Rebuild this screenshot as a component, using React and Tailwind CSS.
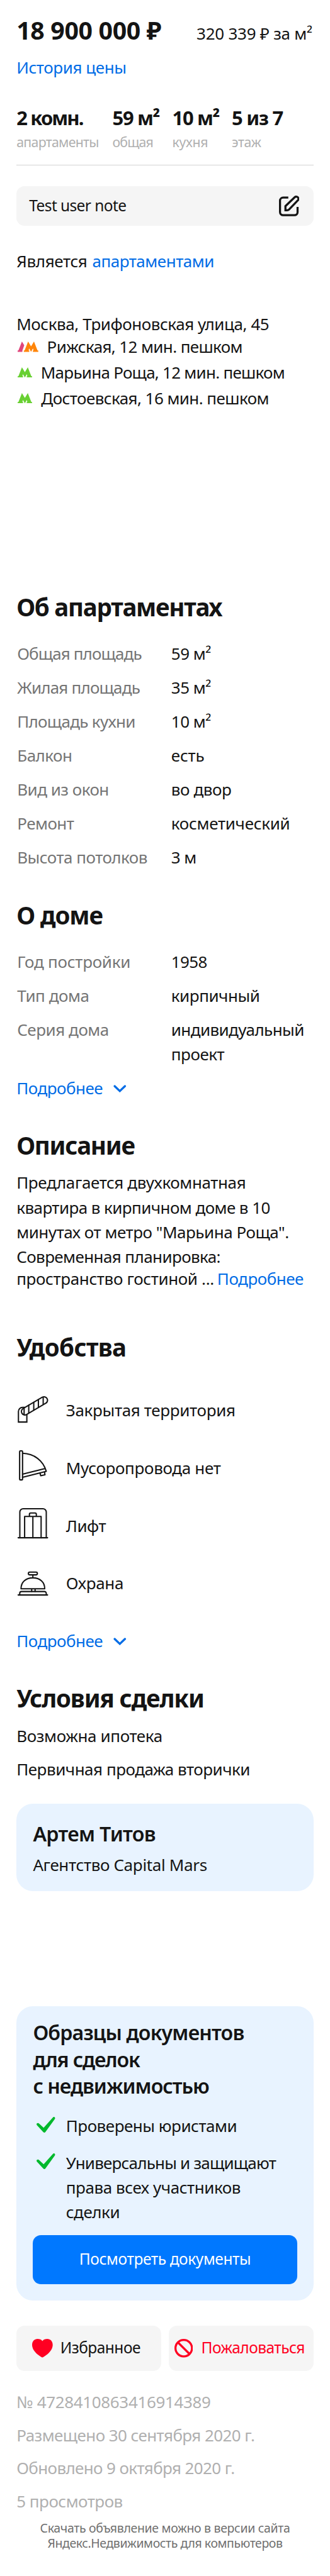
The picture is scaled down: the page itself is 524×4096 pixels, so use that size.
import React from 'react';

const METRO = 'M0 20v-2.500h1.500L8.300 0 14 9.500 19.700 0l6.800 17.500H28V20H17.500v-2.500h1.300l-1.100-4L14 20l-3.700-6.500-1.100 4h1.300V20z';

function MetroGreen() {
  return (
    <svg viewBox="0 0 28 20" className="ml-[1.6px] h-[16.4px] w-[23px] shrink-0" fill="#68d032">
      <path d={METRO} />
    </svg>
  );
}

function MetroDouble() {
  return (
    <svg viewBox="0 0 40 20" className="ml-[1.6px] h-[16.4px] w-[32.8px] shrink-0">
      <path d="M0 20v-2.500h1.500L8.300 0l4.500 7.400L10.500 14l-1.300 3.500V20z" fill="#e0457b" />
      <path d={METRO} transform="translate(12 0)" fill="#ff850a" />
    </svg>
  );
}

function NoteIcon() {
  return (
    <svg viewBox="0 0 40 40" className="h-[32.8px] w-[32.8px]" fill="none" stroke="#141414" strokeWidth="4">
      <path d="M18 3.8H8a6 6 0 0 0-6 6V32a6 6 0 0 0 6 6h22a6 6 0 0 0 6-6V22" />
      <path d="M12.5 28.5v-8L30.3 3.3a4.3 4.3 0 0 1 6.1 6.1L19.5 27q-1.6 1.5-4 1.5z" />
    </svg>
  );
}

function Amenity({ children, icon }) {
  return (
    <div className="flex h-[52.4px] items-center">
      <svg
        viewBox="0 0 64 64"
        className="h-[52.4px] w-[52.4px] shrink-0"
        fill="none"
        stroke="#141414"
        strokeWidth="2.5"
        strokeLinejoin="round"
        strokeLinecap="round"
      >
        {icon}
      </svg>
      <div className="ml-[26.2px] pt-[7.6px]">{children}</div>
    </div>
  );
}

const barrier = (
  <>
    <path d="M20.3 46v14H4V39.5a8 8 0 0 1 8-8h4" strokeLinejoin="miter" />
    <path d="M13.1 33.7 50.3 11.9a6.7 6.7 0 0 1 6.8 11.6L19.9 45.3a6.7 6.7 0 0 1-6.8-11.6z" />
    <path d="M15 33v12M24 27.3v15.2M33.7 21.6v15.2M42.7 16.4v15.2M52 12v14" />
  </>
);

const chute = (
  <>
    <rect x="6.3" y="3.7" width="5.7" height="56.3" rx="1.5" />
    <path d="M12 8.3C34 9 52 22 58 43.5L12 55M12 49l44-11" />
    <path d="m46 47.5 1.2 4.5 8.3-2-.8-4.6" />
  </>
);

const elevator = (
  <>
    <path d="M6.7 60V10.2a6.5 6.5 0 0 1 6.5-6.5h38.3a6.5 6.5 0 0 1 6.5 6.5V60M3.5 60h57" />
    <path d="M16 60V18.7h32V60M32 18.7V60M25.3 18.7v-4.2a2.5 2.5 0 0 1 2.5-2.5h8.4a2.5 2.5 0 0 1 2.5 2.5v4.2" />
  </>
);

const bell = (
  <>
    <rect x="23.3" y="15.5" width="17.4" height="5.4" rx="2.6" />
    <path d="M32 21v5.5M9 48C9 35 18.500 26.700 32 26.700S55 35 55 48zM29.700 48v5M36.300 48v5" />
    <path d="M6.500 60v-3.200a3.500 3.500 0 0 1 3.500-3.500h44.500a3.500 3.500 0 0 1 3.500 3.500V60M3.500 60h57" />
  </>
);

function More() {
  return (
    <div className="flex items-center text-[26px] leading-[39.3px] text-[#006ce6]">
      <span className="tracking-[-0.019em]">Подробнее</span>
      <svg viewBox="0 0 25 15" className="mt-[1px] ml-[17px] h-[12.3px] w-[20.5px]" fill="none" stroke="currentColor" strokeWidth="4" strokeLinecap="round">
        <path d="m2.500 2.500 10 9.500 10-9.500" />
      </svg>
    </div>
  );
}

function Row({ label, children }) {
  return (
    <div className="flex text-[26px] leading-[39.3px]">
      <div className="w-[245.600px] shrink-0 pl-px text-[#757575]">{label}</div>
      <div>{children}</div>
    </div>
  );
}

function Stat({ value, caption, className }) {
  return (
    <div className={className}>
      <div className="text-[31px] leading-[40px] font-bold whitespace-nowrap">{value}</div>
      <div className="mt-1 text-[21.300px] leading-[30px] text-[#b0b0b0]">{caption}</div>
    </div>
  );
}

function Check() {
  return (
    <div className="w-[52.400px] shrink-0 pt-[4.500px] pl-[6px]">
      <svg viewBox="0 0 36 31" className="h-[25.400px] w-[29.500px]" fill="#00b92d">
        <path d="M.8 12.600c1.200-1.200 2.800-1 4 .1l9 8.300L31.600 1.200c1-1.200 2.400-1.500 3.500-.5s1.200 2.300.3 3.600L17.500 29c-1.300 1.900-3 2-4.600.3L.8 16.200c-1-1.100-1-2.500 0-3.600z" />
      </svg>
    </div>
  );
}

const title = 'text-[38.5px] leading-[48px] font-bold whitespace-nowrap';

export default function App() {
  return (
    <div className="h-[4096px] w-[524px] overflow-hidden bg-white px-[26.200px] pt-[24px] font-['Noto_Sans','Liberation_Sans',sans-serif] text-[26px] leading-[40px] whitespace-nowrap text-[#141414]">
      <div className="flex h-[48px] items-baseline justify-between">
        <div className="text-[39.300px] leading-[48px] font-bold tracking-[-0.009em]">18 900 000 ₽</div>
        <div className="pr-[2px] tracking-[-0.010em]">320 339 ₽ за м²</div>
      </div>
      <div className="mt-[15px] tracking-[-0.016em] text-[#006ce6]">История цены</div>

      <div className="mt-[40px] flex">
        <Stat className="w-[152.300px]" value={<span className="tracking-[-0.06em]">2 комн.</span>} caption={<span className="tracking-[-0.033em]">апартаменты</span>} />
        <Stat className="w-[95px]" value={<span className="tracking-[-0.043em]">59 м²</span>} caption={<span className="tracking-[-0.038em]">общая</span>} />
        <Stat className="w-[94.500px]" value={<span className="tracking-[-0.043em]">10 м²</span>} caption={<span className="tracking-[-0.015em]">кухня</span>} />
        <Stat value={<span className="tracking-[-0.04em]">5 из 7</span>} caption={<span className="tracking-[-0.015em]">этаж</span>} />
      </div>
      <div className="mt-[21px] h-px bg-[#d3d3d3]" />

      <div className="mt-[32.500px] flex h-[63.800px] items-center justify-between rounded-[13px] bg-[#f5f5f5] pr-[22.500px] pl-[20px]">
        <div className="pb-[1px] text-[24.500px] tracking-[-0.024em]">Test user note</div>
        <NoteIcon />
      </div>

      <div className="mt-[35.700px] flex">
        <span className="tracking-[-0.013em]">Является</span>
        <span className="ml-[8px] tracking-[-0.0185em] text-[#006ce6]">апартаментами</span>
      </div>

      <div className="mt-[61.600px] leading-[36px]">
        <div className="tracking-[-0.017em]">Москва, Трифоновская улица, 45</div>
        <div className="mt-[0.800px] flex items-center">
          <MetroDouble />
          <span className="ml-[14px] tracking-[-0.024em]">Рижская, 12 мин. пешком</span>
        </div>
        <div className="mt-[4.900px] flex items-center">
          <MetroGreen />
          <span className="ml-[14px] tracking-[-0.0287em]">Марьина Роща, 12 мин. пешком</span>
        </div>
        <div className="mt-[5px] flex items-center">
          <MetroGreen />
          <span className="ml-[14.500px] tracking-[-0.022em]">Достоевская, 16 мин. пешком</span>
        </div>
      </div>

      <div className="h-[289.400px]" />

      <h2 className={title + ' tracking-[-0.033em]'}>Об апартаментах</h2>
      <div className="mt-[31px] flex flex-col gap-[14.700px]">
        <Row label={<span className="tracking-[-0.034em]">Общая площадь</span>}><span className="tracking-[-0.020em]">59 м²</span></Row>
        <Row label={<span className="tracking-[-0.031em]">Жилая площадь</span>}><span className="tracking-[-0.020em]">35 м²</span></Row>
        <Row label={<span className="tracking-[-0.027em]">Площадь кухни</span>}><span className="tracking-[-0.020em]">10 м²</span></Row>
        <Row label={<span className="tracking-[-0.020em]">Балкон</span>}><span className="tracking-[-0.008em]">есть</span></Row>
        <Row label={<span className="tracking-[-0.020em]">Вид из окон</span>}><span className="tracking-[-0.016em]">во двор</span></Row>
        <Row label={<span className="tracking-[-0.020em]">Ремонт</span>}><span className="tracking-[-0.011em]">косметический</span></Row>
        <Row label={<span className="tracking-[-0.020em]">Высота потолков</span>}><span className="tracking-[-0.020em]">3 м</span></Row>
      </div>

      <h2 className={title + ' mt-[48.100px] tracking-[-0.028em]'}>О доме</h2>
      <div className="mt-[30.800px] flex flex-col gap-[14.700px]">
        <Row label={<span className="tracking-[-0.010em]">Год постройки</span>}><span className="tracking-[-0.023em]">1958</span></Row>
        <Row label={<span className="tracking-[-0.018em]">Тип дома</span>}><span className="tracking-[-0.018em]">кирпичный</span></Row>
        <Row label={<span className="tracking-[-0.018em]">Серия дома</span>}>
          <span className="tracking-[-0.023em]">индивидуальный</span>
          <br />
          <span className="tracking-[-0.018em]">проект</span>
        </Row>
      </div>
      <div className="mt-[14.500px]"><More /></div>

      <h2 className={title + ' mt-[46.700px] tracking-[-0.033em]'}>Описание</h2>
      <div className="mt-[16.600px] leading-[39.300px]">
        <div className="tracking-[-0.015em]">Предлагается двухкомнатная</div>
        <div className="tracking-[-0.022em]">квартира в кирпичном доме в 10</div>
        <div className="tracking-[-0.018em]">минутах от метро "Марьина Роща".</div>
        <div className="tracking-[-0.023em]">Современная планировка:</div>
        <div className="flex leading-[29.400px]">
          <span className="tracking-[-0.014em]">пространство гостиной ...</span>
          <span className="ml-[5px] tracking-[-0.019em] text-[#006ce6]">Подробнее</span>
        </div>
      </div>

      <h2 className={title + ' mt-[70.200px] tracking-[-0.016em]'}>Удобства</h2>
      <div className="mt-[46px] flex flex-col gap-[39.300px]">
        <Amenity icon={barrier}><span className="tracking-[-0.013em]">Закрытая территория</span></Amenity>
        <Amenity icon={chute}><span className="tracking-[-0.0125em]">Мусоропровода нет</span></Amenity>
        <Amenity icon={elevator}><span className="tracking-[-0.018em]">Лифт</span></Amenity>
        <Amenity icon={bell}><span className="tracking-[-0.013em]">Охрана</span></Amenity>
      </div>
      <div className="mt-[50.100px]"><More /></div>

      <h2 className={title + ' mt-[46.800px] tracking-[-0.029em]'}>Условия сделки</h2>
      <div className="mt-[16.500px] tracking-[-0.015em]">Возможна ипотека</div>
      <div className="mt-[12.400px] tracking-[-0.0184em]">Первичная продажа вторички</div>

      <div className="mt-[35.100px] h-[139.200px] rounded-[26.200px] bg-[#e8f3ff] px-[26.200px] pt-[28.700px]">
        <div className="text-[32.200px] font-semibold tracking-[-0.021em]">Артем Титов</div>
        <div className="mt-[8.200px] tracking-[-0.0135em]">Агентство Capital Mars</div>
      </div>

      <div className="mt-[183.300px] h-[468px] rounded-[26.200px] bg-[#e8f3ff] px-[26.200px] pt-[20.900px]">
        <div className="text-[32.200px] leading-[42.500px] font-semibold">
          <div className="tracking-[-0.026em]">Образцы документов</div>
          <div className="tracking-[-0.037em]">для сделок</div>
          <div className="tracking-[-0.031em]">с недвижимостью</div>
        </div>
        <div className="mt-[22.500px] flex leading-[39.300px]">
          <Check />
          <span className="tracking-[-0.0186em]">Проверены юристами</span>
        </div>
        <div className="mt-[19.300px] flex leading-[39.300px]">
          <Check />
          <div>
            <div className="tracking-[-0.031em]">Универсальны и защищают</div>
            <div className="tracking-[-0.0166em]">права всех участников</div>
            <div className="tracking-[-0.018em]">сделки</div>
          </div>
        </div>
        <button className="mt-[16px] flex h-[78.600px] w-full items-center justify-center rounded-[13px] bg-[#0078ff] pb-[1px] text-[24.500px] tracking-[-0.0165em] text-white">
          Посмотреть документы
        </button>
      </div>

      <div className="mt-[39.500px] flex justify-between">
        <button className="flex h-[72px] w-[230px] items-center rounded-[13px] bg-[#f5f5f5] pl-[25.300px]">
          <svg viewBox="0 0 40 36" className="h-[29.500px] w-[32.700px]" fill="#ff0022">
            <path d="M20 36C15.500 34 0 24.500 0 11.500 0 4.500 4.500 0 10.500 0c4 0 7.500 1.200 9.500 4.200C22 1.200 25.500 0 29.500 0 35.500 0 40 4.500 40 11.500 40 24.500 24.500 34 20 36z" />
          </svg>
          <span className="ml-[11.500px] pb-[1px] text-[24.500px] tracking-[-0.0204em]">Избранное</span>
        </button>
        <button className="flex h-[72px] w-[230px] items-center rounded-[13px] bg-[#f5f5f5] pl-[9px] text-[#ff0022]">
          <svg viewBox="0 0 36 36" className="h-[29.500px] w-[29.500px]" fill="none" stroke="currentColor" strokeWidth="4">
            <circle cx="18" cy="18" r="16" />
            <path d="m7 7 22 22" />
          </svg>
          <span className="ml-[13.300px] pb-[1px] text-[24.500px] tracking-[-0.0213em]">Пожаловаться</span>
        </button>
      </div>

      <div className="mt-[29.700px] flex flex-col gap-[12.400px] text-[#b0b0b0]">
        <div className="tracking-[-0.0138em]">№ 4728410863416914389</div>
        <div className="tracking-[-0.0225em]">Размещено 30 сентября 2020 г.</div>
        <div className="tracking-[-0.0242em]">Обновлено 9 октября 2020 г.</div>
        <div className="tracking-[-0.0193em]">5 просмотров</div>
      </div>

      <div className="mt-[11px] text-center text-[19.500px] leading-[24.500px] text-[#707070]">
        <div className="tracking-[-0.017em]">Скачать объявление можно в версии сайта</div>
        <div className="tracking-[-0.022em]">Яндекс.Недвижимость для компьютеров</div>
      </div>
    </div>
  );
}
